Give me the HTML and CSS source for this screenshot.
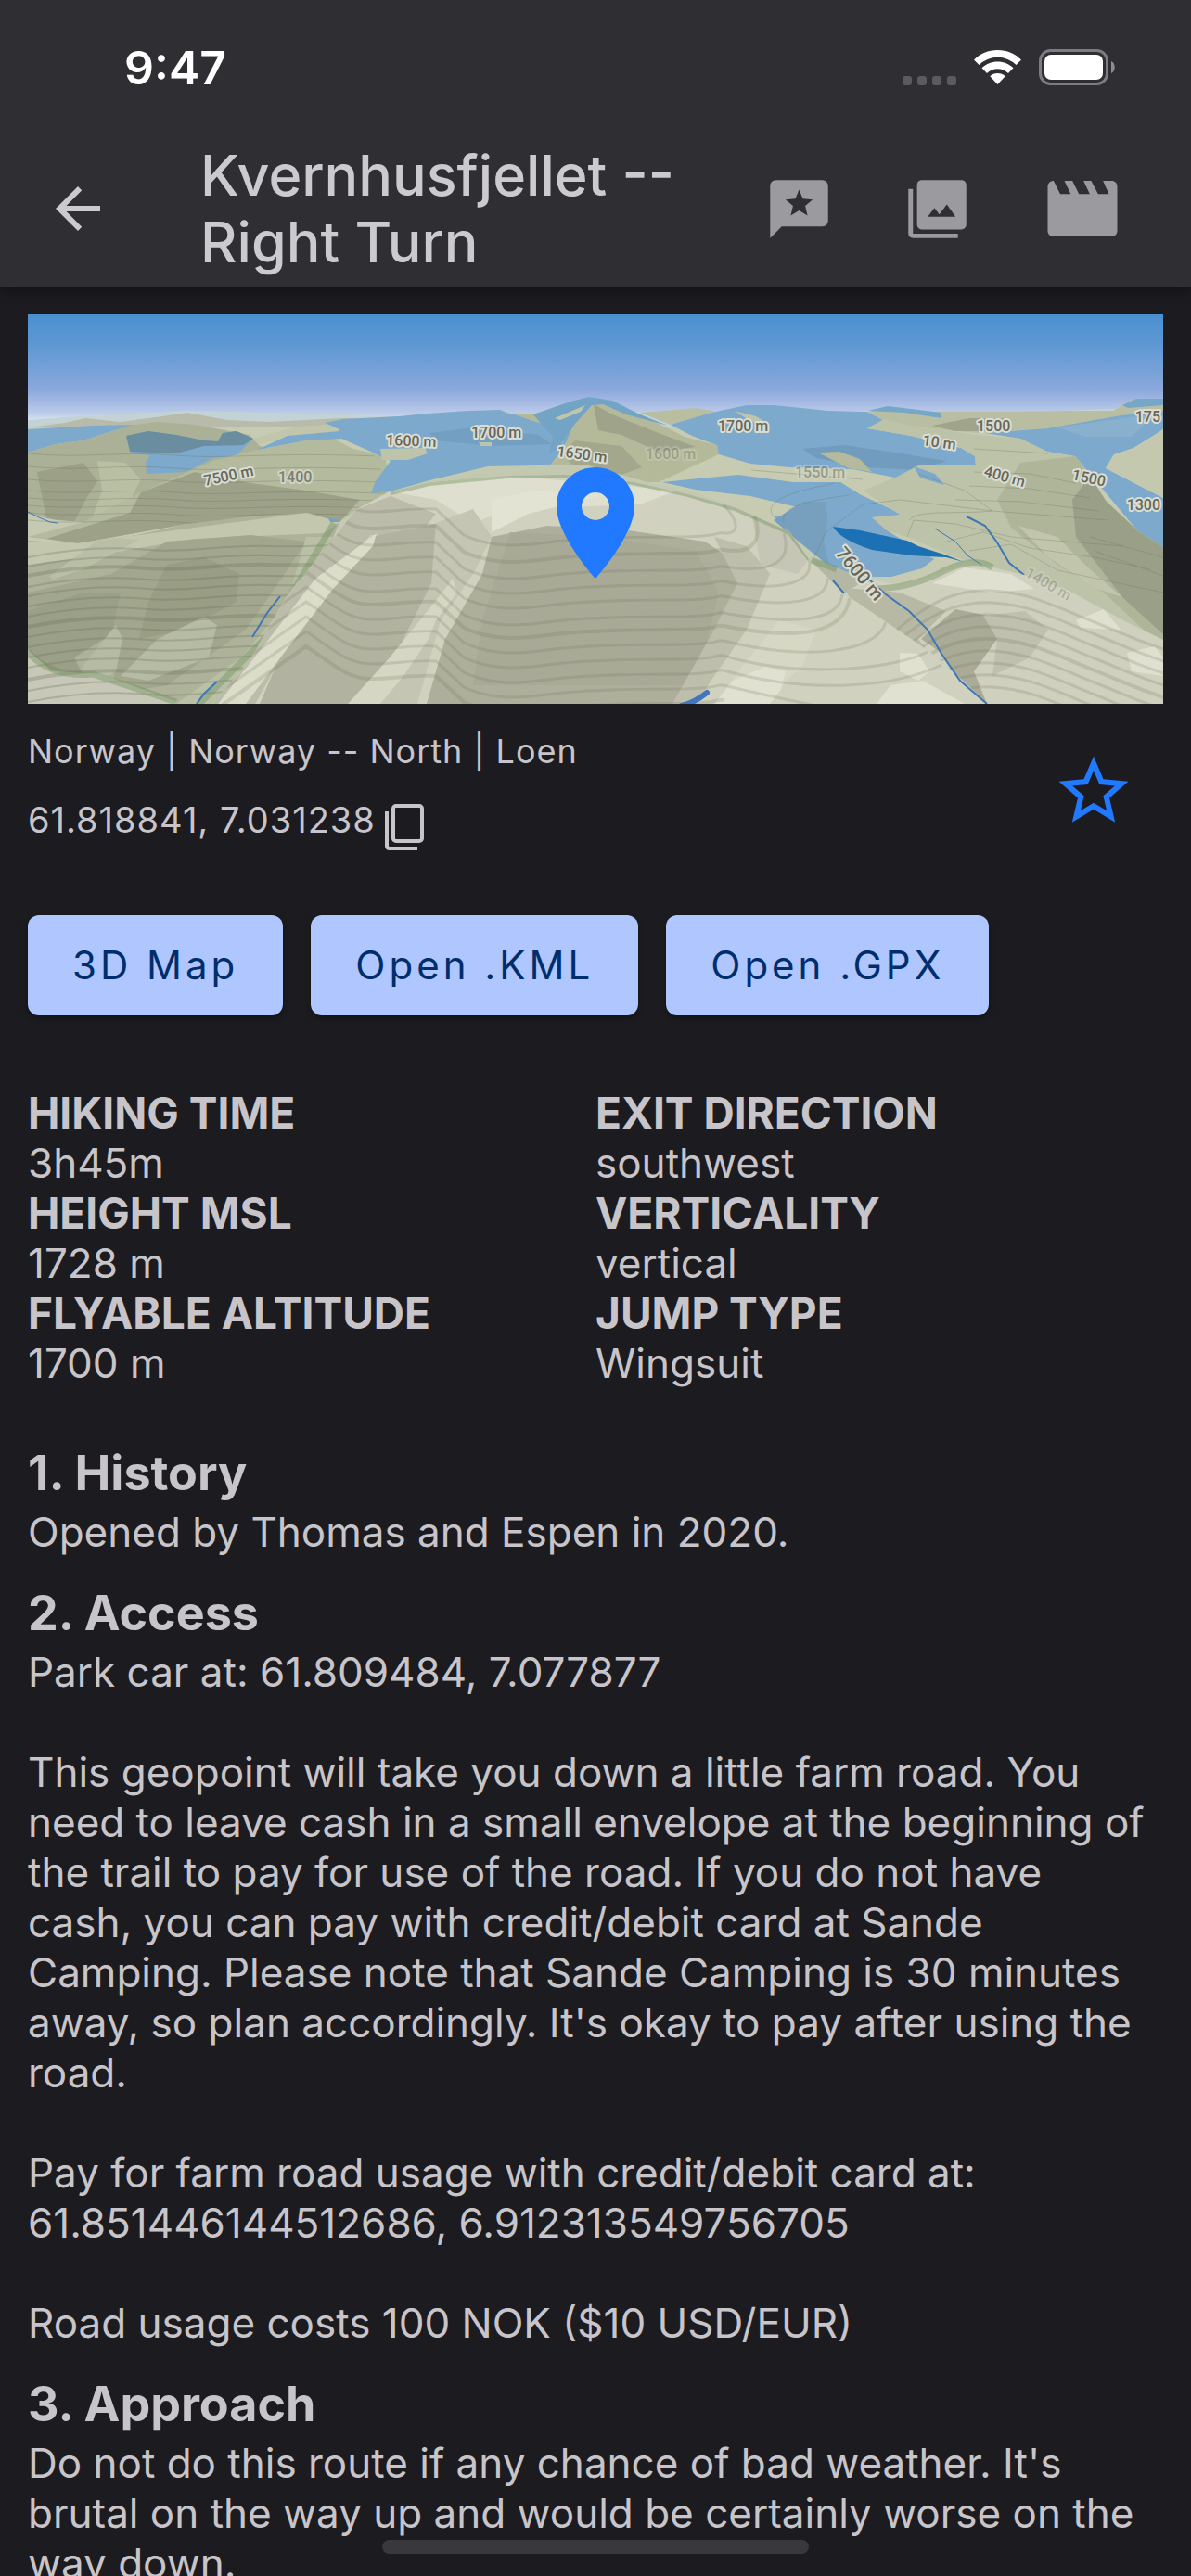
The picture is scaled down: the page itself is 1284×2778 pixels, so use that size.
FILE: index.html
```html
<!DOCTYPE html>
<html lang="en">
<head>
  <meta charset="UTF-8" />
  <meta name="viewport" content="width=device-width, initial-scale=1.0"/>
  <title>Kvernhusfjellet -- Right Turn</title>
  <link rel="stylesheet" href="styles.css">
</head>
<body>
  <div class="screen">
    <header class="app-header">
      <div class="status-bar">
        <span class="time">9:47</span>
        <div class="status-icons">
          <svg width="58" height="10" viewBox="0 0 58 10" class="dots">
            <rect width="10" height="10" rx="3"/><rect x="16" width="10" height="10" rx="3"/>
            <rect x="32" width="10" height="10" rx="3"/><rect x="48" width="10" height="10" rx="3"/>
          </svg>
          <svg width="51" height="37" viewBox="0 0 51 37" class="wifi">
            <path d="M25.500 0C35.500 0 44.500 4 51 10.500L45.500 16A28.500 28.500 0 0 0 5.500 16L0 10.500C6.500 4 15.500 0 25.500 0Z"/>
            <path d="M25.500 12.500C32 12.500 38 15 42.500 19.300L37 25A16.500 16.500 0 0 0 14 25L8.500 19.300C13 15 19 12.500 25.500 12.500Z"/>
            <path d="M25.500 25C28.500 25 31.500 26.200 33.700 28.200L25.500 37L17.300 28.200C19.500 26.200 22.500 25 25.500 25Z"/>
          </svg>
          <svg width="82" height="39" viewBox="0 0 82 39">
            <rect x="1.500" y="1.500" width="72" height="36" rx="11" fill="none" stroke="#7d7c80" stroke-width="3"/>
            <rect x="6" y="6" width="63" height="27" rx="7" fill="#fff"/>
            <path d="M78 13c5 2 5 11 0 13z" fill="#8d8c90"/>
          </svg>
        </div>
      </div>
      <div class="toolbar">
        <button type="button" class="icon-button back" aria-label="Back">
          <svg width="72" height="72" viewBox="0 0 24 24"><path d="M20 11H7.830l5.590-5.590L12 4l-8 8 8 8 1.410-1.410L7.830 13H20v-2z"/></svg>
        </button>
        <h1>Kvernhusfjellet -- Right Turn</h1>
        <div class="actions">
          <button type="button" class="icon-button" aria-label="Reviews">
            <svg width="75" height="75" viewBox="0 0 24 24"><path fill-rule="evenodd" d="M20 2H4c-1.100 0-2 .9-2 2v18l4-4h14c1.100 0 2-.9 2-2V4c0-1.100-.9-2-2-2zM12 5.300l1.300 3.100 3.400.3-2.600 2.200.8 3.300-2.900-1.700-2.900 1.700.8-3.300-2.600-2.200 3.400-.3z"/></svg>
          </button>
          <button type="button" class="icon-button" aria-label="Photos">
            <svg width="75" height="75" viewBox="0 0 24 24"><path fill-rule="evenodd" d="M7 2h13.300c1 0 1.700.7 1.700 1.700v13.600c0 1-.7 1.700-1.700 1.700H6.700c-1 0-1.700-.7-1.700-1.700V3.700C5 2.700 5.700 2 6.700 2zM8.700 14.600h9.600l-3-4.200-2.600 3.400-1.700-2.200z"/><path d="M2 5h1.600v15.500h15.500V22H3.700C2.700 22 2 21.300 2 20.300z"/></svg>
          </button>
          <button type="button" class="icon-button" aria-label="Videos">
            <svg width="90" height="90" viewBox="0 0 24 24"><path d="M3.700 4l1.900 3.800h3L6.800 4h2.300L11 7.800h3.100L12.300 4h2.200l2 3.800h3.100L17.900 4h2.500c.9 0 1.600.7 1.600 1.600v12.800c0 .9-.7 1.600-1.600 1.600H3.600c-.9 0-1.600-.7-1.600-1.600V5.600C2 4.700 2.800 4 3.700 4z"/></svg>
          </button>
        </div>
      </div>
    </header>

    <main>
      <svg class="map" viewBox="0 0 1224 420" preserveAspectRatio="xMidYMid slice" role="img" aria-label="Terrain map of the exit point">
        <defs>
          <linearGradient id="sky" x1="0" y1="0" x2="0" y2="1">
            <stop offset="0" stop-color="#4a90d0"/>
            <stop offset=".3" stop-color="#5f98d3"/>
            <stop offset=".7" stop-color="#8ba8dc"/>
            <stop offset=".92" stop-color="#bccbe9"/>
            <stop offset="1" stop-color="#dde9f3"/>
          </linearGradient>
          <clipPath id="clip-left"><path d="M0 244L54 247L117 238L172 226L239 218L302 214L336 224L328 244L281 301L239 374L199 420H0Z"/></clipPath>
          <clipPath id="clip-peak"><path d="M199 420L239 374L281 301L328 244L353 211L391 191L433 181L517 174L580 173L653 181L712 194L762 208L821 234L842 264L880 301L931 331L973 364L1015 401L1034 420Z"/></clipPath>
          <clipPath id="clip-right"><path d="M880 301L905 285L940 292L980 280L1009 270L1040 273L1074 281L1124 299L1183 331L1224 351V420H1034L1015 401L973 364Z"/></clipPath>
          <clipPath id="clip-far"><path d="M0 149L60 136L109 120L180 119L239 130L310 134L372 149L391 190L353 211L336 224L0 244Z"/></clipPath>
          <path id="line-left" d="M0 0C50 -10 90 -12 130 -8S210 -14 260 -12S320 -16 350 -10"/>
          <path id="line-peak" d="M200 50L300 -20C330 0 345 15 370 15S420 10 440 12L470 40C500 54 530 52 560 48S650 42 700 42S740 36 750 38"/>
          <path id="line-right" d="M930 40C970 5 1000 -10 1040 -8S1110 10 1150 26S1200 48 1240 60"/>
          <path id="line-far" d="M0 0C60 6 100 -3 160 2S260 -3 400 4"/>
        </defs>
        <rect width="1224" height="116" fill="url(#sky)"/>
        <path d="M0 114L54 110L172 104L300 107L420 110L560 107L720 104L900 104L1020 107L1224 100V130H0Z" fill="#c3d2d4"/>
        <path d="M0 122L40 117L62 112L100 116L138 111L172 106L215 114L260 116L340 112L420 112V150H0Z" fill="#b8bbaa"/>
        <rect y="122" width="1224" height="298" fill="#c6cbb2"/>

        <!-- western ridge and its lakes -->
        <path d="M0 124L70 120L115 119L85 128L60 136L30 140L0 149Z" fill="#7ca9cc"/>
        <path d="M0 149L30 140L60 136L85 128L109 120L140 116L180 119L239 130L250 142L290 152L330 180V224H0Z" fill="#abb196"/>
        <path d="M10 170L60 160L75 180L62 200L50 224L20 220Z" fill="#9ba087"/>
        <path d="M75 158L105 160L122 178L108 205L70 218L80 190Z" fill="#b9bfa2"/>
        <path d="M106 131L130 126L160 130L190 136L205 137L210 128L225 126L243 134L225 152L200 155L170 170L128 172L127 160L132 152L112 150Z" fill="#7ca9cc"/>
        <path d="M106 131L130 126L160 130L190 136L205 137L210 128L225 126L243 134L232 141L190 142L160 150L110 148Z" fill="#6a8e9f"/>
        <path d="M243 134L290 121L336 118V128L290 130L250 140Z" fill="#c0c5ab"/>
        <path d="M60 224L117 194L200 158L243 147L310 134L330 134L350 145L385 152L391 190L353 211L336 224L302 214L172 226L54 247L0 240V236Z" fill="#b4ba9d"/>
        <path d="M122 192L180 170L240 182L300 190L358 200L336 224L302 214L172 226L54 247L20 242L110 214Z" fill="#9ca188"/>
        <path d="M0 215L30 222L60 224L0 240Z" fill="#c5c9b2"/>
        <path d="M0 213L12 219L24 224L32 225" fill="none" stroke="#3d78b8" stroke-width="1"/>
        <path d="M247 146L280 131L336 126L340 134L300 136Z" fill="#7ca9cc"/>
        <g clip-path="url(#clip-far)" class="contours faint">
          <use href="#line-far" y="150"/><use href="#line-far" y="164"/><use href="#line-far" y="178"/>
          <use href="#line-far" y="190"/><use href="#line-far" y="198"/><use href="#line-far" y="206"/>
          <use href="#line-far" y="214"/><use href="#line-far" y="222"/>
        </g>

        <!-- central lake -->
        <path d="M320 117L340 113L400 110L430 107L475 104L509 103L520 108L560 108L600 100L583 135L575 148L562 164L496 166L433 180L391 191L370 193L375 180L386 165L391 158L370 148L336 133V124Z" fill="#7ca9cc"/>
        <path d="M433 128L480 122L550 130L565 140L500 142L440 136Z" fill="#73a0c1"/>
        <path d="M380 145L428 144L431 150L410 157L382 157Z" fill="#bec4aa"/>
        <path d="M486 138H500V142H488Z" fill="#bec4aa"/>
        <path d="M509 103L520 108H545L590 93L601 97L620 92L660 108L708 132L743 141L745 151L680 181L640 181L562 164L575 150L590 115L560 120Z" fill="#b3b999"/>
        <path d="M610 97L630 108L680 128L720 143L680 148L640 130L615 125Z" fill="#9ea389"/>
        <path d="M575 150L590 136L640 142L662 165L640 173L590 165Z" fill="#a3a88d"/>
        <path d="M545 108L585 94L605 89L630 93L660 108L690 120L645 108L620 97L608 98L590 118L570 145L562 150L566 132L555 120Z" fill="#73a4c5"/>
        <path d="M568 112L601 98L596 105L574 114Z" fill="#c0c6aa"/>

        <!-- eastern lakes -->
        <path d="M660 106L720 101L760 108L693 119Z" fill="#b9bea1"/>
        <path d="M693 119L737 106L775 98L804 98L863 104L905 105L922 114L905 123L952 131L1006 144L1021 153L1022 163L960 163L968 172L985 184L965 178L935 176L889 167L821 165L779 161L745 151L743 141L716 131Z" fill="#7ca9cc"/>
        <path d="M762 104L785 110L797 117L780 116Z" fill="#bec4aa"/>
        <path d="M835 145L880 141L935 149L990 158L960 168L900 165L850 155Z" fill="#719cbd"/>
        <path d="M852 149L875 148L897 156L910 170L885 166Z" fill="#b4ba9b"/>
        <path d="M684 181L766 173L825 181L876 181L897 194L943 216L966 224L926 218L910 219L926 233L977 264L964 274L931 283L889 283L863 271L830 244L804 218L846 218L830 208L779 196L720 189Z" fill="#7ca9cc"/>
        <path d="M820 212L836 202L860 202L862 222L858 245L864 271L830 244L804 222Z" fill="#76a0bd"/>
        <path d="M905 105L930 100L975 105L1060 105L1120 104L1170 104L1190 92L1224 91V112L1179 112L1099 123L1023 128L960 122L922 114Z" fill="#b9bea2"/>
        <path d="M906 104L927 99L985 106V112L945 106Z" fill="#76a7c9"/>
        <path d="M975 120L1015 112L1057 112L1032 126L1000 126Z" fill="#9fa48b"/>
        <path d="M1032 128L1099 123L1179 109L1224 104V124L1192 144L1171 151L1162 166L1224 198V251L1196 233L1129 153L1099 148L1070 134Z" fill="#7ca9cc"/>
        <path d="M1180 98L1195 91H1224V98L1186 101Z" fill="#76a7c9"/>
        <path d="M1110 122L1180 112L1215 108L1190 132L1140 132Z" fill="#89b0cd"/>
        <path d="M1192 146L1224 124V198L1162 166L1171 151Z" fill="#c3c8ae"/>
        <path d="M905 123L922 114L952 120L1023 130L1070 134L1099 148L1129 153L1145 174L1162 201L1196 233L1224 251V360L1124 299L1040 273L1000 262L948 240L926 233L910 219L940 216L900 190L935 176L960 163L1022 163L1021 153L1006 144L952 131Z" fill="#bdc3a8"/>
        <path d="M1070 160L1129 153L1145 174L1162 201L1196 233L1224 251V360L1160 300L1110 270L1060 230L1045 200Z" fill="#afb599"/>
        <path d="M1126 200L1145 174L1162 201L1196 233L1224 251V345L1180 305L1130 240Z" fill="#9aa087"/>
        <path d="M955 164L978 172L988 184L962 176Z" fill="#7ca9cc"/>
        <path d="M1068 228L1110 240L1145 275L1180 305L1150 295L1100 262Z" fill="#c0c5ab"/>
        <g class="contours faint">
          <path d="M1020 170L1080 172L1130 182"/><path d="M1015 185L1080 188L1145 198"/><path d="M1000 200L1070 202L1155 212"/>
          <path d="M950 222C960 210 1000 216 1040 212L1165 222"/><path d="M948 240L955 222L1000 226L1060 240L1180 250"/>
          <path d="M990 245L1030 235L1080 252L1150 262L1210 275"/><path d="M1015 255L1060 248L1110 276L1224 300"/>
          <path d="M804 218C790 200 830 190 870 182"/><path d="M815 225C810 205 850 200 885 195"/>
          <path d="M848 262L860 235L900 205L940 200L1040 212L1010 190L960 172"/><path d="M1145 240L1224 262"/><path d="M1150 255L1224 282"/>
          <path d="M1020 145L1100 150"/><path d="M780 168L900 178"/>
        </g>
        <path d="M868 229L897 233L948 244L960 250L988 259L1009 267L990 262L952 260L910 254Q876 243 868 229Z" fill="#1b71b3"/>
        <g class="streams">
          <path d="M978 231L1000 245L1013 260L1028 270"/>
          <path d="M1012 218L1032 228L1045 246L1058 268L1074 281" stroke-width="2"/>
        </g>

        <!-- western foreground -->
        <g clip-path="url(#clip-left)">
          <rect y="210" width="350" height="210" fill="#adb299"/>
          <path d="M0 246L120 238L300 214L336 224L320 236L180 242L60 262L0 270Z" fill="#c2c7ae"/>
          <path d="M150 245L240 238L300 245L270 290L235 340L150 400L90 410L100 345L50 320L0 340V300L90 280Z" fill="#a1a68d"/>
          <path d="M0 320L60 300L100 300L90 345L50 370L60 390L0 380Z" fill="#9a9f87"/>
          <path d="M150 270L190 262L228 280L225 310L170 340L120 350L130 310Z" fill="#989d84"/>
          <path d="M60 378L95 335L102 350L95 385L60 405ZM140 350L190 326L204 335L195 370L130 395L100 390Z" fill="#b6bca4"/>
          <path d="M24 282L80 240L120 243L60 275L26 286Z" fill="#b9bfa5"/>
          <path d="M280 310L300 240L330 240L281 301L239 374L199 420L160 420L230 370Z" fill="#bac0a6"/>
          <path d="M0 362L26 385L80 388L160 418V420H0Z" fill="#c7c8b7"/>
          <g class="contours">
            <use href="#line-left" y="262"/><use href="#line-left" y="272"/><use href="#line-left" y="282" class="bold"/><use href="#line-left" y="294"/>
            <use href="#line-left" y="304"/><use href="#line-left" y="315"/><use href="#line-left" y="326"/><use href="#line-left" y="337" class="bold"/>
            <use href="#line-left" y="348"/><use href="#line-left" y="359"/><use href="#line-left" y="370"/><use href="#line-left" y="381"/>
            <use href="#line-left" y="394" class="bold"/><use href="#line-left" y="406"/><use href="#line-left" y="418"/>
          </g>
          <path d="M0 364Q24 392 70 388L160 418" class="forest"/>
          <path d="M185 420L225 380L270 335L285 300L330 225" class="forest"/>
          <path d="M272 304L258 322L242 348M204 396L190 409L182 420" class="river"/>
        </g>
        <path d="M324 220L336 222V224H326Z" fill="#6fa3cb"/>

        <!-- summit -->
        <path d="M391 191L433 179L496 164L601 162L665 180L720 192L762 208L653 183L517 176L433 183Z" fill="#c3c9b0"/>
        <path d="M842 262L866 275L880 301L931 331L973 364L1000 380L960 330L905 300L900 285L860 268Z" fill="#b6b9a4"/>
        <g clip-path="url(#clip-peak)">
          <rect x="190" y="165" width="850" height="255" fill="#d0d1bf"/>
          <path d="M391 191L433 181L517 174L700 190L660 205L520 210L480 225L440 200Z" fill="#dedfce"/>
          <path d="M353 211L391 196L440 215L420 240L370 238L340 270L290 340L245 420H199L239 374L281 301Z" fill="#bbbcaa"/>
          <path d="M370 240L440 226L462 240L445 290L420 350L380 420H250L280 350L330 290Z" fill="#b1b29f"/>
          <path d="M376 236L372 250L330 295L280 360L235 420H205L260 350L310 285Z" fill="#dbdcc9"/>
          <path d="M440 225L480 210L500 240L480 280L445 330L420 420H360L400 360L435 290Z" fill="#c4c5b3"/>
          <path d="M458 285L463 300L440 330L432 350L405 390L380 420H345L390 370L435 315Z" fill="#d5d6c4"/>
          <path d="M500 240L560 228L640 232L730 245L775 275L770 320L735 390L700 420H430L450 350L490 280Z" fill="#adae9b"/>
          <path d="M520 235L620 240L720 255L745 300L720 400H480L490 330Z" fill="#a8a996"/>
          <path d="M740 240L775 250L800 280L775 340L740 390L720 420H695L740 340L765 290Z" fill="#bdbeac"/>
          <path d="M780 215L821 234L842 264L830 280L790 270Z" fill="#c5c6b5"/>
          <path d="M810 330L850 340L835 380L790 420H740L770 380Z" fill="#d6d7c5"/>
          <path d="M760 395L795 380L817 385L812 405L800 420H740ZM940 365L960 366L972 385L960 395L940 385ZM930 400L965 395L1010 420H915Z" fill="#e0e1d0"/>
          <path d="M500 200L545 190L620 195L540 215L500 235Z" fill="#e2e3d3"/>
          <g class="contours soft">
            <use href="#line-peak" y="198"/><use href="#line-peak" y="216" class="bold"/><use href="#line-peak" y="234"/><use href="#line-peak" y="250"/>
            <use href="#line-peak" y="266"/><use href="#line-peak" y="284"/><use href="#line-peak" y="298" class="bold"/><use href="#line-peak" y="314"/>
            <use href="#line-peak" y="330"/><use href="#line-peak" y="346"/><use href="#line-peak" y="362"/><use href="#line-peak" y="378" class="bold"/>
            <path d="M750 236C770 238 765 220 750 206"/><path d="M750 254C785 260 792 240 783 216" class="bold"/>
            <path d="M750 272C800 280 825 268 815 236"/><path d="M750 288C810 300 850 290 842 264"/>
            <path d="M750 304C820 318 862 310 862 285"/><path d="M750 322C830 336 875 330 878 302"/>
            <path d="M750 336C830 352 880 345 886 306" class="bold"/><path d="M750 352C840 374 915 365 925 332"/>
            <path d="M750 368C840 395 940 380 970 364"/><path d="M750 384C850 412 940 400 985 378"/>
            <path d="M750 400C800 412 830 418 860 424"/>
          </g>
          <path d="M391 193L433 183L517 175L600 174L653 182L712 195L762 210L821 236L842 264" class="forest thin"/>
          <path d="M705 422Q720 418 732 408" fill="none" stroke="#3f76bd" stroke-width="6" stroke-linecap="round"/>
        </g>

        <!-- eastern foreground -->
        <path d="M842 264L880 301L931 331L973 364L920 300L890 283L862 270Z" fill="#b4b7a3"/>
        <g clip-path="url(#clip-right)">
          <rect x="870" y="260" width="360" height="160" fill="#cfd0be"/>
          <path d="M880 295L940 300L990 320L960 350L975 370L1015 400L1034 420H1000L900 330Z" fill="#b7b9a5"/>
          <path d="M963 350L1000 318L1035 325L1045 350L1020 385L1034 420H1020L985 365Z" fill="#a9ab98"/>
          <path d="M1030 325L1075 320L1100 340L1080 370L1040 390L1045 350Z" fill="#bfc0ae"/>
          <path d="M975 290L1010 273L1060 280L1085 296L1040 300ZM1130 330L1160 318L1178 340L1135 338ZM1185 365L1215 358L1224 370V390L1190 385Z" fill="#dfe0cf"/>
          <g class="contours soft">
            <use href="#line-right" y="306"/><use href="#line-right" y="319"/><use href="#line-right" y="332"/><use href="#line-right" y="345"/>
            <use href="#line-right" y="358" class="bold"/><use href="#line-right" y="371"/><use href="#line-right" y="384"/><use href="#line-right" y="397"/>
            <use href="#line-right" y="410"/>
          </g>
        </g>
        <path d="M910 296Q950 296 985 278T1040 273" class="forest"/>
        <path d="M845 265L872 275" class="forest"/>
        <path d="M868 287L880 301M907 286L925 302L950 320L970 340L985 366L1005 395L1034 420" class="river"/>

        <g class="labels">
          <text x="386" y="141" transform="rotate(2 386 141)">1600 m</text>
          <text x="478" y="133">1700 m</text>
          <text x="570" y="153" transform="rotate(7 570 153)">1650 m</text>
          <text x="191" y="185" transform="rotate(-12 191 185)">7500 m</text>
          <text x="270" y="181" opacity=".7">1400</text>
          <text x="744" y="126">1700 m</text>
          <text x="666" y="156" opacity=".3">1600 m</text>
          <text x="827" y="176" opacity=".45">1550 m</text>
          <text x="964" y="141" transform="rotate(8 964 141)">10 m</text>
          <text x="1023" y="126">1500</text>
          <text x="1030" y="174" transform="rotate(16 1030 174)">400 m</text>
          <text x="1125" y="178" transform="rotate(12 1125 178)">1500</text>
          <text x="1221" y="116" text-anchor="end">175</text>
          <text x="1221" y="211" text-anchor="end">1300</text>
          <text x="870" y="258" transform="rotate(50 870 258)" class="large">7600 m</text>
          <text x="1074" y="282" transform="rotate(30 1074 282)" opacity=".3">1400 m</text>
        </g>
        <path transform="translate(540 153) scale(6)" fill="#2179ff" fill-rule="evenodd" d="M12 2C8.130 2 5 5.130 5 9c0 5.250 7 13 7 13s7-7.750 7-13c0-3.870-3.130-7-7-7zm0 9.500a2.500 2.500 0 0 1 0-5 2.500 2.500 0 0 1 0 5z"/>
      </svg>

      <section class="location">
        <div>
          <p>Norway | Norway -- North | Loen</p>
          <div class="coordinates">
            <span>61.818841, 7.031238</span>
            <button type="button" class="icon-button copy" aria-label="Copy coordinates">
              <svg width="42" height="50" viewBox="0 0 42 50" fill="none" stroke="#c8c5ca" stroke-width="4">
                <rect x="9" y="2" width="31" height="38" rx="3"/>
                <path d="M2 8v37q0 3 3 3h30"/>
              </svg>
            </button>
          </div>
        </div>
        <button type="button" class="icon-button favorite" aria-label="Add to favorites">
          <svg width="90" height="90" viewBox="0 0 24 24"><path d="M22 9.240l-7.190-.62L12 2 9.190 8.630 2 9.240l5.460 4.730L5.820 21 12 17.270 18.180 21l-1.630-7.030L22 9.240zM12 15.400l-3.760 2.270 1-4.280-3.320-2.880 4.380-.38L12 6.100l1.710 4.040 4.380.38-3.320 2.880 1 4.280L12 15.400z"/></svg>
        </button>
      </section>

      <div class="buttons">
        <button type="button">3D Map</button>
        <button type="button">Open .KML</button>
        <button type="button">Open .GPX</button>
      </div>

      <div class="details">
        <dl>
          <dt>HIKING TIME</dt><dd>3h45m</dd>
          <dt>HEIGHT MSL</dt><dd>1728 m</dd>
          <dt>FLYABLE ALTITUDE</dt><dd>1700 m</dd>
        </dl>
        <dl>
          <dt>EXIT DIRECTION</dt><dd>southwest</dd>
          <dt>VERTICALITY</dt><dd>vertical</dd>
          <dt>JUMP TYPE</dt><dd>Wingsuit</dd>
        </dl>
      </div>

      <section class="chapter">
        <h2>1. History</h2>
        <p>Opened by Thomas and Espen in 2020.</p>
      </section>
      <section class="chapter">
        <h2>2. Access</h2>
        <p>Park car at: 61.809484, 7.077877</p>
        <p>This geopoint will take you down a little farm road. You need to leave cash in a small envelope at the beginning of the trail to pay for use of the road. If you do not have cash, you can pay with credit/debit card at Sande Camping. Please note that Sande Camping is 30 minutes away, so plan accordingly. It's okay to pay after using the road.</p>
        <p>Pay for farm road usage with credit/debit card at: 61.851446144512686, 6.912313549756705</p>
        <p>Road usage costs 100 NOK ($10 USD/EUR)</p>
      </section>
      <section class="chapter">
        <h2>3. Approach</h2>
        <p>Do not do this route if any chance of bad weather. It's brutal on the way up and would be certainly worse on the way down.</p>
      </section>
    </main>
    <div class="home-indicator"></div>
  </div>
</body>
</html>
```
FILE: styles.css
```css
* { margin: 0; padding: 0; box-sizing: border-box; }
body {
  font-family: Inter, "Liberation Sans", sans-serif;
  background-color: #1c1b1f;
  color: #c8c5ca;
  font-size: 44px;
  line-height: 54px;
}
button { font: inherit; border: none; cursor: pointer; }
svg { display: block; }
.screen {
  position: relative;
  display: flex;
  flex-direction: column;
  height: 100vh;
  overflow: hidden;
}

/* Header */
.app-header {
  position: relative;
  flex: none;
  background-color: #2f2e33;
  box-shadow: 0 4px 12px rgba(0,0,0,0.4);
}
.status-bar {
  display: flex;
  align-items: center;
  justify-content: space-between;
  height: 141px;
  padding: 4px 82px 0 134px;
}
.time { color: #fff; font-size: 50px; font-weight: 600; }
.status-icons { display: flex; align-items: center; gap: 19px; }
.dots { fill: #5b5a5e; align-self: flex-end; }
.wifi { fill: #fff; }
.toolbar {
  display: flex;
  align-items: center;
  min-height: 168px;
  padding: 0 72px 0 48px;
}
.icon-button { background: none; fill: #9b9a9f; flex: none; }
.back { fill: #cbcacc; }
.toolbar h1 {
  flex: 1;
  padding: 0 60px 0 96px;
  color: #cbcacc;
  font-size: 61px;
  font-weight: 500;
  line-height: 72px;
}
.actions { display: flex; align-items: center; gap: 74px; }

/* Content */
main {
  flex: 1;
  min-height: 0;
  padding: 30px 30px 0;
  overflow-y: auto;
  scrollbar-width: none;
}
.map { width: 100%; height: 420px; }
.contours { fill: none; stroke: #6d715c; stroke-width: 2; stroke-opacity: 0.3; }
.contours.faint { stroke-width: 1; }
.contours.soft { stroke-width: 3; stroke-opacity: 0.2; }
.contours .bold { stroke-width: 4; }
.forest { fill: none; stroke: #6f8f5c; stroke-width: 7; stroke-opacity: 0.4; }
.forest.thin { stroke-width: 4; }
.streams, .river { fill: none; stroke: #3f76b5; stroke-width: 1; }
.river { stroke-width: 2; }
.labels {
  font-family: Roboto, sans-serif;
  font-size: 16px;
  font-weight: 500;
  fill: #66675c;
  stroke: #dcddd2;
  stroke-width: 4px;
  stroke-linejoin: round;
  paint-order: stroke;
}
.labels .large { font-size: 20px; }

.location {
  display: flex;
  align-items: center;
  justify-content: space-between;
  padding: 24px 30px 0 0;
  font-size: 36px;
  letter-spacing: 1px;
}
.coordinates { display: flex; align-items: flex-start; height: 66px; margin-top: 20px; font-size: 38px; }
.copy { padding: 10px 10px 0; }
.favorite { fill: #2179ff; }

.buttons { display: flex; gap: 30px; margin-top: 64px; }
.buttons button {
  height: 108px;
  padding: 0 48px;
  border-radius: 12px;
  background-color: #afc6ff;
  box-shadow: 0 3px 6px rgba(0,0,0,0.3);
  color: #002d6c;
  font-size: 42px;
  letter-spacing: 4px;
}

.details { display: grid; grid-template-columns: 1fr 1fr; margin-top: 78px; }
.details dt { font-size: 46px; font-weight: 700; }

.chapter { margin-top: 31px; padding-right: 12px; }
.details + .chapter { margin-top: 62px; }
.chapter h2 { margin-bottom: 6px; font-size: 52px; font-weight: 700; line-height: 60px; }
.chapter p + p { margin-top: 54px; }

.home-indicator {
  position: absolute;
  left: 50%;
  bottom: 24px;
  width: 460px;
  height: 15px;
  border-radius: 8px;
  background-color: #39393b;
  transform: translateX(-50%);
}
```
